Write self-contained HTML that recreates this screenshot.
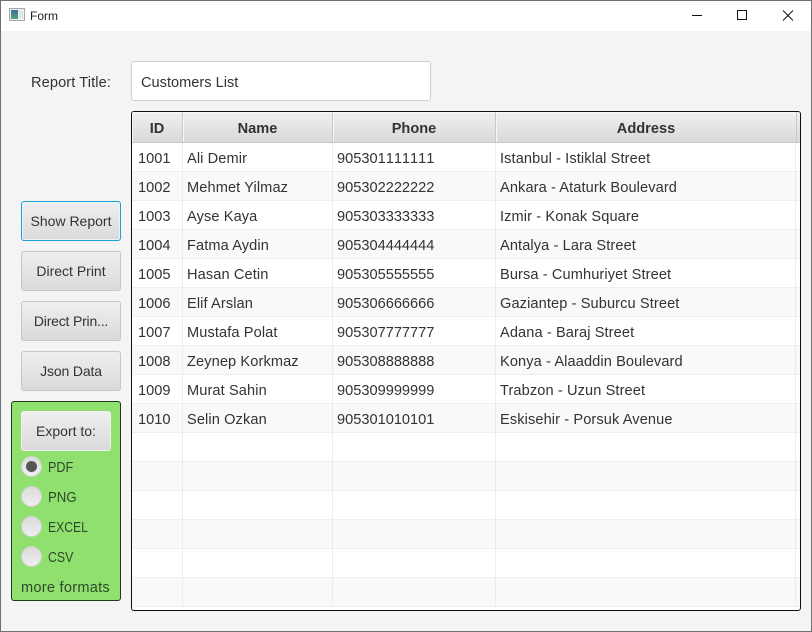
<!DOCTYPE html>
<html><head><meta charset="utf-8"><title>Form</title>
<style>
*{box-sizing:border-box;margin:0;padding:0}
html,body{width:812px;height:632px;overflow:hidden;background:#f4f4f4}
body{font-family:"Liberation Sans",sans-serif;font-size:14.6px;color:#333;position:relative}
.a{position:absolute}
.t{position:absolute;white-space:nowrap;line-height:18px;margin-top:1px;letter-spacing:.1px}
.n{letter-spacing:0;font-kerning:none}
.c{transform-origin:left center;color:#2f4a2a;letter-spacing:0;font-size:15px}
#win{position:absolute;left:0;top:0;width:812px;height:632px;border:1px solid #707070;pointer-events:none}
#bar{position:absolute;left:0;top:0;width:812px;height:31px;background:#fff}
.btn{position:absolute;left:21px;width:100px;height:40px;border:1px solid #c6c6c6;border-radius:3px;background:linear-gradient(#efefef,#dadada);text-align:center;line-height:38px;font-size:14px;color:#333;white-space:nowrap}
.radio{position:absolute;left:21px;width:21px;height:21px;border-radius:50%;background:linear-gradient(#dcdcdc,#eeeeee);border:1px solid #d0d0d0}
.row{position:absolute;left:0;width:668px;height:29px;border-bottom:1px solid #eee}
.v{position:absolute;top:31px;width:1px;height:464px;background:#ececec}
.h{position:absolute;top:0;height:31px;background:linear-gradient(#f0f0f0,#d9d9d9);border-right:1px solid #c9c9c9;border-bottom:1px solid #c9c9c9;box-shadow:inset 1px 1px 0 #f7f7f7;text-align:center;font-weight:bold;line-height:34px;font-size:14.6px;color:#333}
</style></head><body>
<div id="bar"></div>
<svg class="a" style="left:9px;top:8px" width="16" height="14" viewBox="0 0 16 14"><defs><linearGradient id="g" x1="0" y1="0" x2="0" y2="1"><stop offset="0" stop-color="#3f6f95"/><stop offset="1" stop-color="#4fa07f"/></linearGradient></defs><rect x=".5" y=".5" width="15" height="12" fill="#efefef" stroke="#a8a8a8"/><rect x="2" y="2" width="7" height="9" fill="url(#g)"/><rect x="10" y="3" width="4" height="7" fill="#dfe9e4"/></svg>
<div class="t" style="left:30px;top:6px;font-size:12px;color:#222;letter-spacing:0">Form</div>
<svg class="a" style="left:690px;top:8px" width="110" height="16" viewBox="0 0 110 16" fill="none" stroke="#111" stroke-width="1"><path d="M2 7.5H12"/><path d="M47.5 2.5H56.5V11.5H47.5Z"/><path d="M93 2.5L103 12.5M103 2.5L93 12.5"/></svg>

<div class="t" style="left:31px;top:73px;letter-spacing:.1px">Report Title:</div>
<div class="a" style="left:131px;top:61px;width:300px;height:40px;background:#fff;border:1px solid #cfcfcf;border-radius:3px"></div>
<div class="t" style="left:141px;top:73px;letter-spacing:0">Customers List</div>

<div class="btn" style="top:201px;border:1px solid #1ba1d6;box-shadow:inset 0 0 0 1px #e8f4f8">Show Report</div>
<div class="btn" style="top:251px">Direct Print</div>
<div class="btn" style="top:301px;letter-spacing:-.2px">Direct Prin...</div>
<div class="btn" style="top:351px;letter-spacing:-.15px">Json Data</div>

<div class="a" style="left:11px;top:401px;width:110px;height:200px;background:#90e070;border:1px solid #1f3a1a;border-radius:3px"></div>
<div class="btn" style="left:21px;top:411px;width:90px;border-color:#f2f2f2">Export to:</div>
<div class="radio" style="top:456px"></div>
<div class="a" style="left:26px;top:461px;width:11px;height:11px;border-radius:50%;background:#555"></div>
<div class="radio" style="top:486px"></div>
<div class="radio" style="top:516px"></div>
<div class="radio" style="top:546px"></div>
<div class="t c" style="left:48px;top:458px;transform:scaleX(.84)">PDF</div>
<div class="t c" style="left:48px;top:488px;transform:scaleX(.88)">PNG</div>
<div class="t c" style="left:48px;top:518px;transform:scaleX(.81)">EXCEL</div>
<div class="t c" style="left:48px;top:548px;transform:scaleX(.82)">CSV</div>
<div class="t" style="left:21px;top:578px;color:#2f4a2a;letter-spacing:.25px">more formats</div>

<div class="a" id="tbl" style="left:131px;top:111px;width:670px;height:500px;background:#fff;border:1px solid #111;border-radius:3px;overflow:hidden">
<div class="h" style="left:0;width:51px">ID</div>
<div class="h" style="left:51px;width:150px">Name</div>
<div class="h" style="left:201px;width:163px">Phone</div>
<div class="h" style="left:364px;width:301px">Address</div>
<div class="a" style="left:665px;top:0;width:4px;height:31px;background:linear-gradient(#f0f0f0,#d9d9d9);border-bottom:1px solid #c9c9c9"></div>
<div class="row" style="top:31px;background:#fff"></div>
<div class="row" style="top:60px;background:#f9f9f9"></div>
<div class="row" style="top:89px;background:#fff"></div>
<div class="row" style="top:118px;background:#f9f9f9"></div>
<div class="row" style="top:147px;background:#fff"></div>
<div class="row" style="top:176px;background:#f9f9f9"></div>
<div class="row" style="top:205px;background:#fff"></div>
<div class="row" style="top:234px;background:#f9f9f9"></div>
<div class="row" style="top:263px;background:#fff"></div>
<div class="row" style="top:292px;background:#f9f9f9"></div>
<div class="row" style="top:321px;background:#fff"></div>
<div class="row" style="top:350px;background:#f9f9f9"></div>
<div class="row" style="top:379px;background:#fff"></div>
<div class="row" style="top:408px;background:#f9f9f9"></div>
<div class="row" style="top:437px;background:#fff"></div>
<div class="row" style="top:466px;background:#f9f9f9"></div>
<div class="v" style="left:50px"></div>
<div class="v" style="left:200px"></div>
<div class="v" style="left:363px"></div>
<div class="v" style="left:663px"></div>
</div>

<div class="t n" style="left:138px;top:149px">1001</div><div class="t" style="left:187px;top:149px">Ali Demir</div><div class="t n" style="left:337px;top:149px">905301111111</div><div class="t" style="left:500px;top:149px">Istanbul - Istiklal Street</div>
<div class="t n" style="left:138px;top:178px">1002</div><div class="t" style="left:187px;top:178px">Mehmet Yilmaz</div><div class="t n" style="left:337px;top:178px">905302222222</div><div class="t" style="left:500px;top:178px">Ankara - Ataturk Boulevard</div>
<div class="t n" style="left:138px;top:207px">1003</div><div class="t" style="left:187px;top:207px">Ayse Kaya</div><div class="t n" style="left:337px;top:207px">905303333333</div><div class="t" style="left:500px;top:207px">Izmir - Konak Square</div>
<div class="t n" style="left:138px;top:236px">1004</div><div class="t" style="left:187px;top:236px">Fatma Aydin</div><div class="t n" style="left:337px;top:236px">905304444444</div><div class="t" style="left:500px;top:236px">Antalya - Lara Street</div>
<div class="t n" style="left:138px;top:265px">1005</div><div class="t" style="left:187px;top:265px">Hasan Cetin</div><div class="t n" style="left:337px;top:265px">905305555555</div><div class="t" style="left:500px;top:265px">Bursa - Cumhuriyet Street</div>
<div class="t n" style="left:138px;top:294px">1006</div><div class="t" style="left:187px;top:294px">Elif Arslan</div><div class="t n" style="left:337px;top:294px">905306666666</div><div class="t" style="left:500px;top:294px">Gaziantep - Suburcu Street</div>
<div class="t n" style="left:138px;top:323px">1007</div><div class="t" style="left:187px;top:323px">Mustafa Polat</div><div class="t n" style="left:337px;top:323px">905307777777</div><div class="t" style="left:500px;top:323px">Adana - Baraj Street</div>
<div class="t n" style="left:138px;top:352px">1008</div><div class="t" style="left:187px;top:352px">Zeynep Korkmaz</div><div class="t n" style="left:337px;top:352px">905308888888</div><div class="t" style="left:500px;top:352px">Konya - Alaaddin Boulevard</div>
<div class="t n" style="left:138px;top:381px">1009</div><div class="t" style="left:187px;top:381px">Murat Sahin</div><div class="t n" style="left:337px;top:381px">905309999999</div><div class="t" style="left:500px;top:381px">Trabzon - Uzun Street</div>
<div class="t n" style="left:138px;top:410px">1010</div><div class="t" style="left:187px;top:410px">Selin Ozkan</div><div class="t n" style="left:337px;top:410px">905301010101</div><div class="t" style="left:500px;top:410px">Eskisehir - Porsuk Avenue</div>
<div id="win"></div>
</body></html>
